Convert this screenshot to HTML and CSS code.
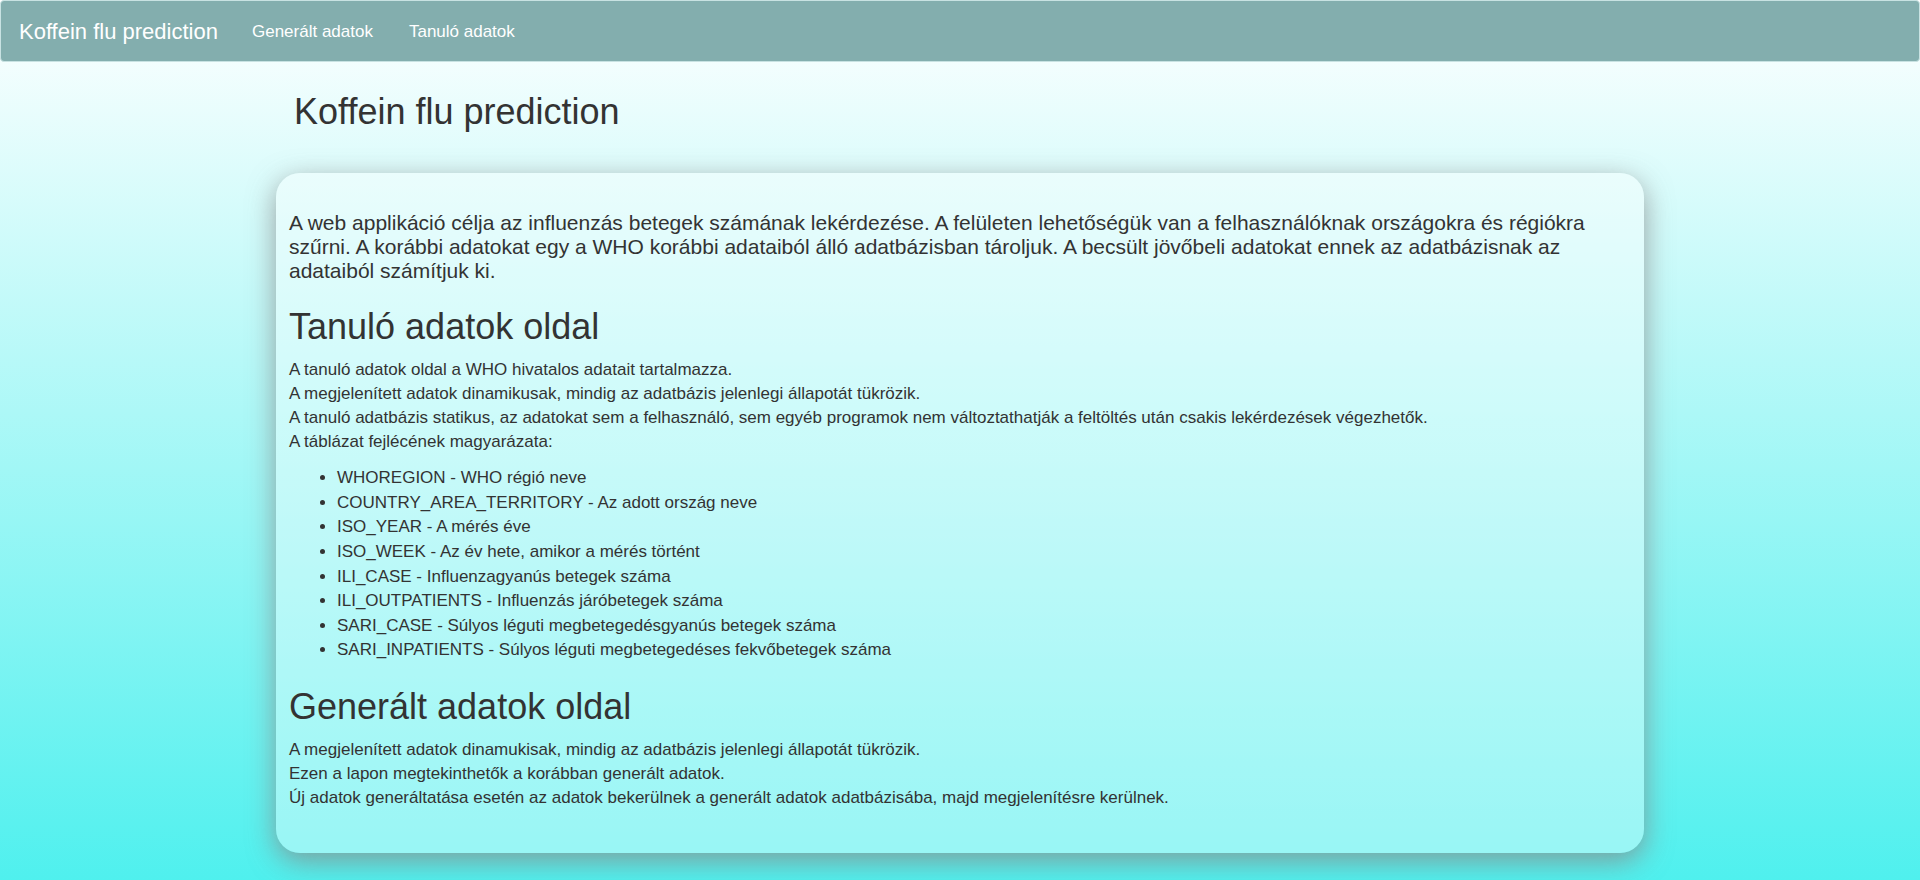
FILE: index.html
```html
<!DOCTYPE html>
<html lang="hu">
<head>
<meta charset="utf-8">
<title>Koffein flu prediction</title>
<link rel="stylesheet" href="styles.css">
</head>
<body>
<nav class="navbar">
  <a class="navbar-brand" href="#">Koffein flu prediction</a>
  <ul class="navbar-links">
    <li><a href="#">Generált adatok</a></li>
    <li><a href="#">Tanuló adatok</a></li>
  </ul>
</nav>
<main class="page">
  <h1 class="page-title">Koffein flu prediction</h1>
  <section class="card">
    <p class="intro">A web applikáció célja az influenzás betegek számának lekérdezése. A felületen lehetőségük van a felhasználóknak országokra és régiókra szűrni. A korábbi adatokat egy a WHO korábbi adataiból álló adatbázisban tároljuk. A becsült jövőbeli adatokat ennek az adatbázisnak az adataiból számítjuk ki.</p>
    <h2 class="heading">Tanuló adatok oldal</h2>
    <p class="text">A tanuló adatok oldal a WHO hivatalos adatait tartalmazza.<br>
    A megjelenített adatok dinamikusak, mindig az adatbázis jelenlegi állapotát tükrözik.<br>
    A tanuló adatbázis statikus, az adatokat sem a felhasználó, sem egyéb programok nem változtathatják a feltöltés után csakis lekérdezések végezhetők.<br>
    A táblázat fejlécének magyarázata:</p>
    <ul class="fields">
      <li>WHOREGION - WHO régió neve</li>
      <li>COUNTRY_AREA_TERRITORY - Az adott ország neve</li>
      <li>ISO_YEAR - A mérés éve</li>
      <li>ISO_WEEK - Az év hete, amikor a mérés történt</li>
      <li>ILI_CASE - Influenzagyanús betegek száma</li>
      <li>ILI_OUTPATIENTS - Influenzás járóbetegek száma</li>
      <li>SARI_CASE - Súlyos léguti megbetegedésgyanús betegek száma</li>
      <li>SARI_INPATIENTS - Súlyos léguti megbetegedéses fekvőbetegek száma</li>
    </ul>
    <h2 class="heading">Generált adatok oldal</h2>
    <p class="text">A megjelenített adatok dinamukisak, mindig az adatbázis jelenlegi állapotát tükrözik.<br>
    Ezen a lapon megtekinthetők a korábban generált adatok.<br>
    Új adatok generáltatása esetén az adatok bekerülnek a generált adatok adatbázisába, majd megjelenítésre kerülnek.</p>
  </section>
</main>
</body>
</html>
```
FILE: styles.css
```css
* {
  box-sizing: border-box;
}

html {
  min-height: 100%;
  background: linear-gradient(to bottom, #ffffff, #4ff0ee);
}

body {
  margin: 0;
  font-family: "Liberation Sans", Arial, sans-serif;
  font-size: 17px;
  line-height: 24px;
  color: #333;
}

.navbar {
  display: flex;
  align-items: center;
  padding: 19px 18px 17px;
  border: 1px solid #c8e2e2;
  border-radius: 4px;
  background: #83aeae;
}

.navbar a {
  color: #fff;
  text-decoration: none;
}

.navbar-brand {
  font-size: 22px;
}

.navbar-links {
  display: flex;
  gap: 36px;
  margin: 0 0 0 34px;
  padding: 0;
  list-style: none;
}

.page {
  max-width: 1368px;
  margin: 0 auto;
  padding: 30px 0 28px;
}

.page-title,
.heading {
  font-size: 36px;
  font-weight: 400;
  line-height: 40px;
}

.page-title {
  margin: 0 18px 41px;
}

.card {
  padding: 38px 13px 43px;
  border-radius: 24px;
  background: rgba(255, 255, 255, 0.4);
  box-shadow: 0 8px 28px rgba(136, 136, 136, 0.8);
}

.intro {
  margin: 0 0 24px;
  font-size: 21px;
  line-height: 24px;
}

.heading {
  margin: 24px 0 11px;
}

.text {
  margin: 0;
}

.fields {
  margin: 12px 0 24px;
  padding-left: 48px;
  line-height: 1.45;
}
```
